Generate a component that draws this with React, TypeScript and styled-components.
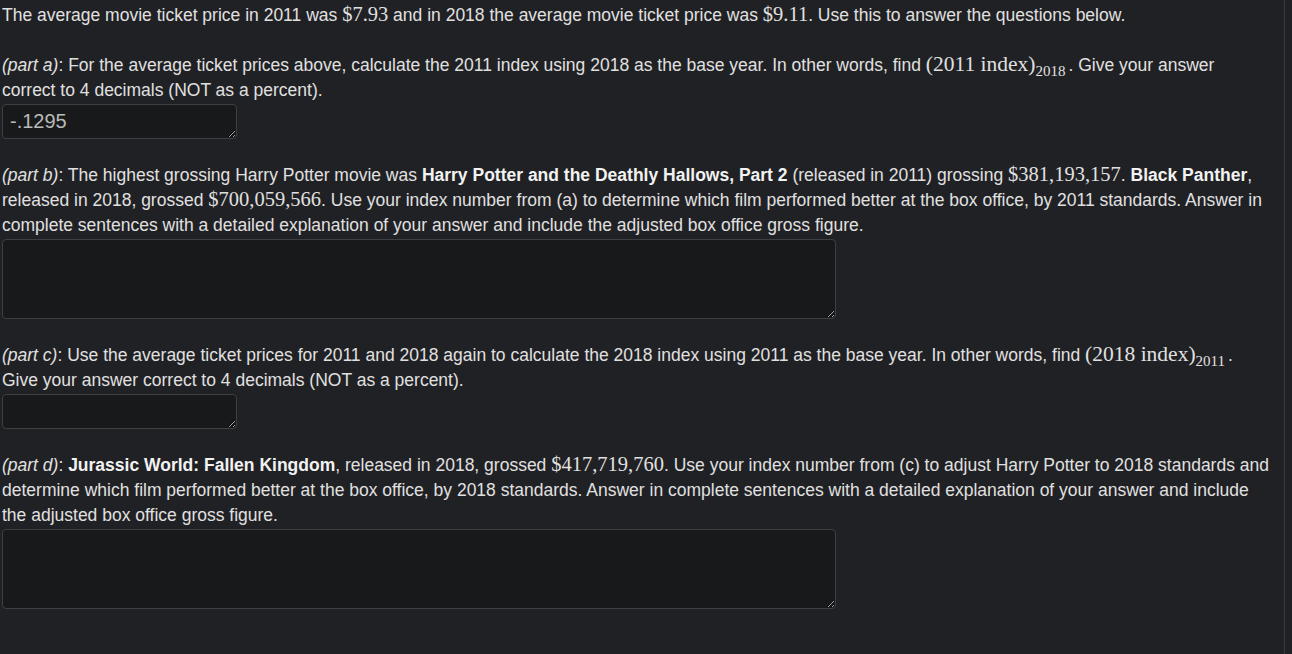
import React from 'react';
import styled, { createGlobalStyle } from 'styled-components';

const GlobalStyle = createGlobalStyle`
    html, body {
        margin: 0;
        padding: 0;
        background: #202124;
    }
`;

const Page = styled.div`
    display: flex;
    height: 654px;
    background: #202124;
`;

const Content = styled.div`
    box-sizing: border-box;
    width: 1285px;
    padding: 3px 0 0 2px;
    border-right: 1px solid #393a3d;
    font-family: 'Liberation Sans', Arial, sans-serif;
    font-size: 17.5px;
    line-height: 25px;
    color: #e0e0e0;
`;

const Gutter = styled.div`
    flex: 1;
`;

const Paragraph = styled.p<{ $after?: number }>`
    margin: 0 0 ${({ $after }) => $after ?? 0}px 0;
    width: 1268px;
`;

const Part = styled.em`
    font-style: italic;
`;

const Strong = styled.strong`
    font-weight: bold;
    color: #f2f2f2;
`;

const Math = styled.span<{ $index?: boolean }>`
    font-family: 'Liberation Serif', 'Times New Roman', serif;
    font-size: ${({ $index }) => ($index ? 21.5 : 20.5)}px;
    line-height: 1;
    white-space: nowrap;
    margin-right: ${({ $index }) => ($index ? 3 : 0)}px;
`;

const Sub = styled.sub`
    font-size: 15px;
    line-height: 0;
    vertical-align: -5px;
`;

const Answer = styled.textarea<{ $wide?: boolean }>`
    display: block;
    box-sizing: border-box;
    width: ${({ $wide }) => ($wide ? 834 : 235)}px;
    height: ${({ $wide }) => ($wide ? 80 : 35)}px;
    margin: 1px 0 24px 0;
    padding: 5px 7px;
    border: 1px solid #3e3f43;
    border-radius: 4px;
    background: #18191b;
    color: #b9b9b9;
    font-family: 'Liberation Sans', Arial, sans-serif;
    font-size: 20px;
    line-height: 23px;
    color-scheme: dark;
    outline: none;
`;

export default function App() {
    return (
        <Page>
            <GlobalStyle />
            <Content>
                <Paragraph $after={25}>
                    The average movie ticket price in 2011 was <Math>$7.93</Math> and in 2018 the average movie
                    ticket price was <Math>$9.11</Math>. Use this to answer the questions below.
                </Paragraph>

                <Paragraph>
                    <Part>(part a)</Part>: For the average ticket prices above, calculate the 2011 index using 2018 as
                    the base year. In other words, find{' '}
                    <Math $index>
                        (2011&nbsp;index)<Sub>2018</Sub>
                    </Math>
                    . Give your answer correct to 4 decimals (NOT as a percent).
                </Paragraph>
                <Answer defaultValue="-.1295" />

                <Paragraph>
                    <Part>(part b)</Part>: The highest grossing Harry Potter movie was{' '}
                    <Strong>Harry Potter and the Deathly Hallows, Part 2</Strong> (released in 2011) grossing{' '}
                    <Math>$381,193,157</Math>. <Strong>Black Panther</Strong>, released in 2018, grossed{' '}
                    <Math>$700,059,566</Math>. Use your index number from (a) to determine which film performed better
                    at the box office, by 2011 standards. Answer in complete sentences with a detailed explanation of
                    your answer and include the adjusted box office gross figure.
                </Paragraph>
                <Answer $wide />

                <Paragraph>
                    <Part>(part c)</Part>: Use the average ticket prices for 2011 and 2018 again to calculate the 2018
                    index using 2011 as the base year. In other words, find{' '}
                    <Math $index>
                        (2018&nbsp;index)<Sub>2011</Sub>
                    </Math>
                    . Give your answer correct to 4 decimals (NOT as a percent).
                </Paragraph>
                <Answer />

                <Paragraph>
                    <Part>(part d)</Part>: <Strong>Jurassic World: Fallen Kingdom</Strong>, released in 2018, grossed{' '}
                    <Math>$417,719,760</Math>. Use your index number from (c) to adjust Harry Potter to 2018 standards
                    and determine which film performed better at the box office, by 2018 standards. Answer in complete
                    sentences with a detailed explanation of your answer and include the adjusted box office gross
                    figure.
                </Paragraph>
                <Answer $wide />
            </Content>
            <Gutter />
        </Page>
    );
}
